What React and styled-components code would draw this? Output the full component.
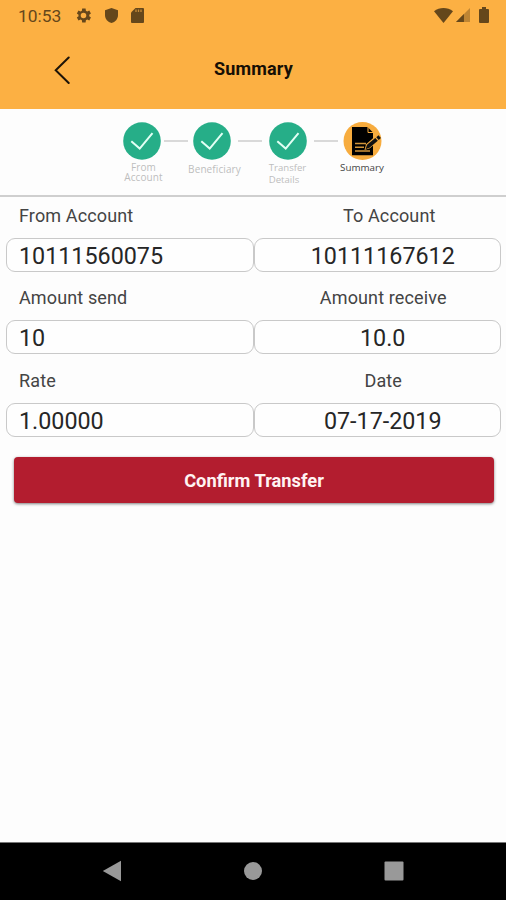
import React from "react";
import styled, { createGlobalStyle } from "styled-components";

const GlobalStyle = createGlobalStyle`
  * { box-sizing: border-box; }
  body { margin: 0; background: #fdfdfd; }
`;

const Screen = styled.div`
  width: 506px;
  height: 900px;
  display: flex;
  flex-direction: column;
  background: #fdfdfd;
  font-family: Roboto, sans-serif;
  color: #1c1c1c;
  overflow: hidden;
`;

const Header = styled.header`
  height: 109px;
  flex: none;
  background: #fcb043;
`;

const StatusBar = styled.div`
  height: 32px;
  display: flex;
  align-items: center;
  padding: 0 17px 2px 18px;
  color: #65471b;
`;

const Clock = styled.span`
  width: 57px;
  padding-top: 1px;
  font-size: 17.4px;
  line-height: 30px;
`;

const StatusIcons = styled.div`
  display: flex;
  align-items: center;
  gap: ${(p) => p.$gap}px;
  margin-left: ${(p) => (p.$end ? "auto" : "0")};
  svg { display: block; }
`;

const SignalSlot = styled.span`
  margin: 0 9px 0 3px;
`;

const TitleBar = styled.div`
  height: 77px;
  display: grid;
  grid-template-columns: 100px 1fr 100px;
  align-items: center;
  padding-bottom: 3px;
`;

const BackButton = styled.button`
  border: 0;
  padding: 1px 0 0 53px;
  background: none;
  svg { display: block; }
`;

const Title = styled.h1`
  margin: 0;
  padding-left: 1px;
  font-size: 18px;
  line-height: 22px;
  font-weight: 700;
  letter-spacing: 0.15px;
  text-align: center;
  color: #160f05;
`;

const Stepper = styled.nav`
  height: 88px;
  flex: none;
  display: flex;
  align-items: flex-start;
  padding: 13px 0 0 120px;
  border-bottom: 2px solid #cfcfcf;
`;

const Step = styled.div`
  width: ${(p) => p.$width}px;
  display: flex;
  flex-direction: column;
  align-items: center;
  svg { display: block; flex: none; }
`;

const StepLabel = styled.div`
  margin: ${(p) => p.$top}px 0 0 ${(p) => p.$shift || 0}px;
  font-family: "Open Sans", sans-serif;
  font-size: ${(p) => p.$size || 10}px;
  line-height: ${(p) => p.$leading || 10}px;
  letter-spacing: ${(p) => p.$tracking || 0}px;
  text-align: ${(p) => p.$align || "center"};
  white-space: pre;
  color: ${(p) => (p.$active ? "#444" : "#bdbdbd")};
`;

const Connector = styled.div`
  width: 24px;
  height: 2px;
  margin: 18px ${(p) => p.$right}px 0 ${(p) => p.$left}px;
  background: #d9d9d9;
`;

const Details = styled.main`
  flex: 1;
  padding: 0 6px;
`;

const FieldRow = styled.div`
  display: grid;
  grid-template-columns: 247.5px 247.5px;
  height: 82.4px;
`;

const Field = styled.div`
  text-align: ${(p) => (p.$center ? "center" : "left")};
`;

const Label = styled.div`
  height: 41px;
  padding-left: ${(p) => p.$indent}px;
  line-height: 37px;
  font-size: 18px;
  font-weight: 400;
  letter-spacing: 0.13px;
  color: #444;
`;

const Value = styled.div`
  height: 34px;
  padding-left: ${(p) => (p.$center ? 11 : 12)}px;
  border: 1.5px solid #c9c9c9;
  border-radius: 9px;
  background: #fefefe;
  font-size: 23.3px;
  line-height: 35px;
  color: #262626;
`;

const ConfirmButton = styled.button`
  display: block;
  width: 480px;
  height: 46px;
  margin: 13px 0 0 8px;
  padding: 2px 0 0;
  border: 0;
  border-radius: 4px;
  background: #b31d2f;
  box-shadow: 0 1px 3px rgba(0, 0, 0, 0.5);
  color: #fff3f3;
  font: 700 18.3px/44px Roboto, sans-serif;
`;

const NavBar = styled.footer`
  height: 58px;
  flex: none;
  display: flex;
  justify-content: space-between;
  align-items: center;
  padding: 0 102px 2px;
  background: #000;
  border-top: 1px solid #777;
  svg { display: block; }
`;

const SettingsIcon = () => (
  <svg width="17" height="17" viewBox="1 1 22 22" fill="currentColor">
    <path
      fillRule="evenodd"
      d="M19.4 13l.1-1-.1-1 2.2-1.7-2.1-3.7-2.7 1.1-1.7-1-.4-2.8h-4.4l-.4 2.8-1.7 1-2.7-1.1-2.1 3.7L5.6 11l-.1 1 .1 1-2.2 1.700 2.100 3.700 2.700-1.100 1.700 1 .4 2.800h4.400l.4-2.800 1.700-1 2.700 1.100 2.100-3.700zM12 15.600a3.600 3.600 0 1 1 0-7.200 3.600 3.600 0 0 1 0 7.200z"
    />
  </svg>
);

const ShieldIcon = () => (
  <svg width="13" height="15" viewBox="0 0 13 15" fill="currentColor">
    <path d="M6.500 0L13 2.300V7c0 4-2.700 7-6.500 8C2.700 14 0 11 0 7V2.300z" />
  </svg>
);

const CardIcon = () => (
  <svg width="13" height="15" viewBox="0 0 13 15" fill="currentColor">
    <path d="M4.500 0H12a1 1 0 0 1 1 1v13a1 1 0 0 1-1 1H1a1 1 0 0 1-1-1V4.500z" />
    <path d="M5 1.500v2.500M7.500 1.500v2.500M10 1.500v2.500" stroke="#c58b38" strokeWidth="1.300" />
  </svg>
);

const WifiIcon = () => (
  <svg width="19" height="15" viewBox="0 0 19 15" fill="currentColor">
    <path d="M0 3.300C5.500-1 13.500-1 19 3.300L9.500 15z" />
  </svg>
);

const SignalIcon = () => (
  <svg width="14" height="14" viewBox="0 0 15 15" fill="currentColor">
    <path d="M15 0v15H0z" opacity="0.4" />
    <path d="M8.500 6.500V15H0z" />
  </svg>
);

const BatteryIcon = () => (
  <svg width="10" height="16" viewBox="0 0 10 16" fill="currentColor">
    <path d="M3 0h4v2h2a1 1 0 0 1 1 1v12a1 1 0 0 1-1 1H1a1 1 0 0 1-1-1V3a1 1 0 0 1 1-1h2z" />
  </svg>
);

const BackIcon = () => (
  <svg width="18" height="28" viewBox="0 0 18 28" fill="none">
    <path d="M15.700 1.500L2.700 14.200l13 12.800" stroke="#1d1408" strokeWidth="2" strokeLinecap="round" />
  </svg>
);

const DoneIcon = () => (
  <svg width="38" height="38" viewBox="0 0 38 38" fill="none">
    <circle cx="19" cy="19" r="18.800" fill="#26ae88" />
    <path d="M8.300 19.300l8.400 7.300L29.500 11.200" stroke="#e2fff4" strokeWidth="2" />
  </svg>
);

const SummaryIcon = () => (
  <svg width="40" height="38" viewBox="0 0 40 38">
    <circle cx="19.500" cy="19" r="19" fill="#f7ac3e" />
    <path d="M9 5h15.500l5.500 5.500v22.700H9z" fill="#000" />
    <path d="M25 5v5.500h5.500" fill="none" stroke="#f7ac3e" strokeWidth="1" />
    <path d="M12 21.500h11M12 25.200h9M12 29h15" stroke="#d2953a" strokeWidth="1.400" />
    <path d="M21.500 28l1.600-5.800L34.300 12.500l3.800 3.800-11.200 9.900z" fill="#f7ac3e" />
    <path d="M22.500 27.200l1.500-4.500 8.300-6.700 2.500 2.800-8.300 6.900z" fill="#111" />
    <path d="M33.300 15.200l2.200-1.900 2.400 2.700-2.200 1.900z" fill="#111" />
  </svg>
);

const fields = [
  { left: ["From Account", "10111560075"], right: ["To Account", "10111167612"], indent: 24 },
  { left: ["Amount send", "10"], right: ["Amount receive", "10.0"], indent: 12 },
  { left: ["Rate", "1.00000"], right: ["Date", "07-17-2019"], indent: 12 },
];

export default function App() {
  return (
    <Screen>
      <GlobalStyle />
      <Header>
        <StatusBar>
          <Clock>10:53</Clock>
          <StatusIcons $gap={13}>
            <SettingsIcon />
            <ShieldIcon />
            <CardIcon />
          </StatusIcons>
          <StatusIcons $end $gap={0}>
            <WifiIcon />
            <SignalSlot><SignalIcon /></SignalSlot>
            <BatteryIcon />
          </StatusIcons>
        </StatusBar>
        <TitleBar>
          <BackButton aria-label="Back"><BackIcon /></BackButton>
          <Title>Summary</Title>
        </TitleBar>
      </Header>

      <Stepper>
        <Step $width={44}>
          <DoneIcon />
          <StepLabel $top={3} $shift={3} $leading={9.5} $tracking={0.1}>{"From\nAccount"}</StepLabel>
        </Step>
        <Connector $left={0} $right={0} />
        <Step $width={48}>
          <DoneIcon />
          <StepLabel $top={4} $shift={5} $tracking={0.1}>Beneficiary</StepLabel>
        </Step>
        <Connector $left={2} $right={2} />
        <Step $width={48}>
          <DoneIcon />
          <StepLabel $top={2} $size={9.6} $leading={12} $align="left" $shift={-1}>{"Transfer\nDetails"}</StepLabel>
        </Step>
        <Connector $left={2} $right={1} />
        <Step $width={48}>
          <SummaryIcon />
          <StepLabel $active $size={9.8} $top={3} $shift={-2}>Summary</StepLabel>
        </Step>
      </Stepper>

      <Details>
        {fields.map(({ left, right, indent }) => (
          <FieldRow key={left[0]}>
            <Field>
              <Label $indent={13}>{left[0]}</Label>
              <Value>{left[1]}</Value>
            </Field>
            <Field $center>
              <Label $indent={indent}>{right[0]}</Label>
              <Value $center>{right[1]}</Value>
            </Field>
          </FieldRow>
        ))}
        <ConfirmButton>Confirm Transfer</ConfirmButton>
      </Details>

      <NavBar>
        <svg width="20" height="22" viewBox="0 0 20 22" fill="#999">
          <path d="M.8 11L19 .8v20.400z" />
        </svg>
        <svg width="18" height="18" viewBox="0 0 18 18" fill="#999">
          <circle cx="9" cy="9" r="9" />
        </svg>
        <svg width="20" height="20" viewBox="0 0 20 20" fill="#999">
          <rect x=".5" y=".5" width="19" height="19" rx="1" />
        </svg>
      </NavBar>
    </Screen>
  );
}
